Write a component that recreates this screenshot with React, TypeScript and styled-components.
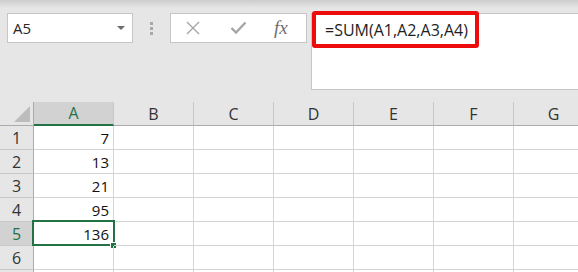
import React from "react";
import styled, { createGlobalStyle } from "styled-components";

const GlobalStyle = createGlobalStyle`
  html, body {
    margin: 0;
    padding: 0;
    background: #e6e6e6;
    overflow: hidden;
  }
  body {
    font-family: "Open Sans", "Noto Sans", sans-serif;
  }
`;

const columns = ["A", "B", "C", "D", "E", "F", "G"];
const values: Record<number, string> = { 1: "7", 2: "13", 3: "21", 4: "95", 5: "136" };
const activeRow = 5;

const Page = styled.div`
  width: 578px;
  height: 272px;
  overflow: hidden;
  background: linear-gradient(#cdcdcd 0px, #e6e6e6 8px);
`;

const Toolbar = styled.div`
  display: flex;
  align-items: flex-start;
  padding: 13px 0 0 7px;
  height: 90px;
  box-sizing: border-box;
`;

const NameBox = styled.div`
  width: 126px;
  height: 30px;
  box-sizing: border-box;
  background: #fff;
  border: 1px solid #c6c6c6;
  display: flex;
  align-items: center;
  justify-content: space-between;
  padding: 0 7px 0 5px;
  font-size: 15px;
  color: #262626;
`;

const Caret = styled.span`
  width: 0;
  height: 0;
  border-left: 4px solid transparent;
  border-right: 4px solid transparent;
  border-top: 4px solid #6d6d6d;
`;

const Grip = styled.div`
  width: 37px;
  height: 30px;
  display: flex;
  flex-direction: column;
  align-items: center;
  justify-content: center;
  gap: 2px;
  span {
    width: 3px;
    height: 3px;
    background: #a8a8a8;
  }
`;

const ButtonsBox = styled.div`
  width: 137px;
  height: 30px;
  box-sizing: border-box;
  background: #fff;
  border: 1px solid #c6c6c6;
  display: flex;
  align-items: center;
  padding-left: 14px;
  gap: 29px;
`;

const Fx = styled.span`
  font-family: "Liberation Serif", "DejaVu Serif", serif;
  font-style: italic;
  font-size: 19px;
  color: #6e6e6e;
  margin-left: -2px;
`;

const FormulaBar = styled.div`
  position: relative;
  flex: 1;
  height: 77px;
  margin-left: 4px;
  background: #fff;
  border: 1px solid #c6c6c6;
  border-right: none;
  box-sizing: border-box;
  padding: 5px 0 0 13px;
  font-size: 16px;
  color: #1e1e1e;
`;

const Highlight = styled.div`
  position: absolute;
  left: 0px;
  top: -3px;
  width: 167px;
  height: 37px;
  box-sizing: border-box;
  border: 4px solid #ec0c0c;
  border-radius: 3px;
`;

const Sheet = styled.div`
  margin-top: 12px;
  display: grid;
  grid-template-columns: 34px repeat(7, 80px);
  grid-auto-rows: 24px;
  background: #fff;
`;

const Corner = styled.div`
  background: #e6e6e6;
  border-right: 1px solid #ababab;
  border-bottom: 1px solid #ababab;
  box-sizing: border-box;
  position: relative;
  &::after {
    content: "";
    position: absolute;
    right: 3px;
    bottom: 3px;
    width: 0;
    height: 0;
    border-left: 16px solid transparent;
    border-bottom: 16px solid #bcbcbc;
  }
`;

const ColHead = styled.div<{ $active?: boolean }>`
  background: ${(p) => (p.$active ? "#d2d2d2" : "#e6e6e6")};
  border-right: 1px solid #c8c8c8;
  border-bottom: ${(p) => (p.$active ? "2px solid #217346" : "1px solid #ababab")};
  box-sizing: border-box;
  display: flex;
  align-items: center;
  justify-content: center;
  font-size: 16px;
  color: ${(p) => (p.$active ? "#217346" : "#333")};
`;

const RowHead = styled.div<{ $active?: boolean }>`
  background: ${(p) => (p.$active ? "#d2d2d2" : "#e6e6e6")};
  border-right: 1px solid #ababab;
  border-bottom: 1px solid #c8c8c8;
  box-sizing: border-box;
  display: flex;
  align-items: center;
  justify-content: center;
  font-size: 16px;
  color: ${(p) => (p.$active ? "#217346" : "#333")};
`;

const Cell = styled.div<{ $active?: boolean }>`
  position: relative;
  border-right: 1px solid #d4d4d4;
  border-bottom: 1px solid #d4d4d4;
  box-sizing: border-box;
  display: flex;
  align-items: center;
  justify-content: flex-end;
  padding-right: 4px;
  font-family: "Open Sans", "Noto Sans", sans-serif;
  font-size: 15px;
  color: #111;
  ${(p) =>
    p.$active &&
    `
    &::before {
      content: "";
      position: absolute;
      left: -2px;
      top: -2px;
      right: -2px;
      bottom: -1px;
      border: 2px solid #217346;
    }
    &::after {
      content: "";
      position: absolute;
      right: -4px;
      bottom: -4px;
      width: 5px;
      height: 5px;
      background: #217346;
      border: 1px solid #fff;
    }
  `}
`;

const CrossIcon = () => (
  <svg width="16" height="16" viewBox="0 0 16 16">
    <path d="M2 2 L14 14 M14 2 L2 14" stroke="#a6a6a6" strokeWidth="1.4" fill="none" />
  </svg>
);

const CheckIcon = () => (
  <svg width="17" height="14" viewBox="0 0 17 14">
    <path d="M1.5 7 L6 11.5 L15.5 1.5" stroke="#a6a6a6" strokeWidth="2.4" fill="none" />
  </svg>
);

export default function App() {
  // row 7 is only a sliver at the bottom edge, so its number is not shown
  const rows = [1, 2, 3, 4, 5, 6, 7];
  return (
    <Page>
      <GlobalStyle />
      <Toolbar>
        <NameBox>
          <span>A5</span>
          <Caret />
        </NameBox>
        <Grip>
          <span />
          <span />
          <span />
        </Grip>
        <ButtonsBox>
          <CrossIcon />
          <CheckIcon />
          <Fx>fx</Fx>
        </ButtonsBox>
        <FormulaBar>
          =SUM(A1,A2,A3,A4)
          <Highlight />
        </FormulaBar>
      </Toolbar>
      <Sheet>
        <Corner />
        {columns.map((c) => (
          <ColHead key={c} $active={c === "A"}>
            {c}
          </ColHead>
        ))}
        {rows.map((r) => (
          <React.Fragment key={r}>
            <RowHead $active={r === activeRow}>{r < 7 ? r : ""}</RowHead>
            {columns.map((c) => (
              <Cell key={c} $active={c === "A" && r === activeRow}>
                {c === "A" ? values[r] : ""}
              </Cell>
            ))}
          </React.Fragment>
        ))}
      </Sheet>
    </Page>
  );
}
